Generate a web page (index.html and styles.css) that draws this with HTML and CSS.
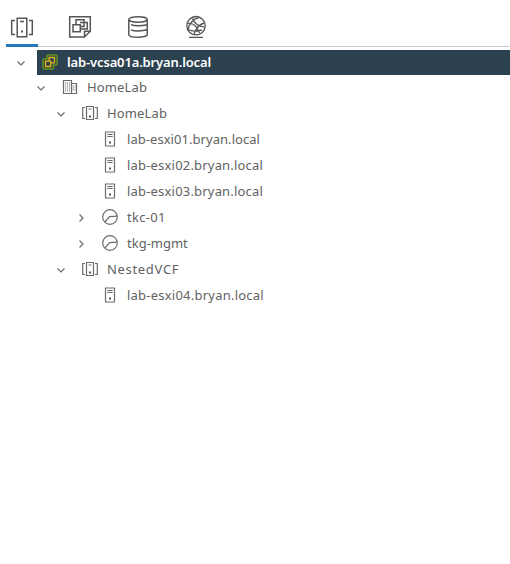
FILE: index.html
```
<!DOCTYPE html>
<html lang="en">
<head>
<meta charset="utf-8">
<title>Inventory</title>
<link rel="stylesheet" href="styles.css">
</head>
<body>
<svg class="defs" width="0" height="0">
  <symbol id="down" viewBox="0 0 10 10"><path d="M1.500 3.500 5 7l3.500-3.500"/></symbol>
  <symbol id="right" viewBox="0 0 10 10"><path d="M3.500 1.500 7 5 3.500 8.500"/></symbol>
  <symbol id="cluster" viewBox="0 0 16 16"><path d="M3 2.500H.7v11H3M13 2.500h2.300v11H13M4.500 1.500h7v13h-7zM6.500 4h3"/><path class="dot" d="M7 10.500h2v2H7z"/></symbol>
  <symbol id="host" viewBox="0 0 16 16"><path d="M3.500 1h9v14h-9zM5.300 3.500h5.400M5.300 5.500h5.400"/><path class="dot" d="M7 10.500h2v2H7z"/></symbol>
  <symbol id="pool" viewBox="0 0 16 16"><circle cx="8" cy="8" r="7.300"/><path d="M2.800 13 7.600 7.700l7.400-.5"/></symbol>
</svg>
<nav class="tabs">
  <a class="tab active"><svg class="tab-icon" viewBox="0 0 24 24"><path d="M5 5.500H1.700v14H5M19 5.500h3.300v14H19M7.200 3.200h9.600v18.600H7.200zM10 6.500h4"/><path class="dot" d="M11 15.500h2v2h-2z"/></svg></a>
  <a class="tab"><svg class="tab-icon" viewBox="0 0 24 24"><path d="M1.700 1.700h20.600v14.500l-5.800 5.800H1.700zM22 16.200h-5.500v5.500"/><path d="M12 7.500h7.300v6.500h-7M8 9.500V4.700h8v6.800h-3.500M5 9.700h7.300v7.100H5z"/></svg></a>
  <a class="tab"><svg class="tab-icon" viewBox="0 0 24 24"><ellipse cx="12" cy="4.500" rx="9.200" ry="2.700"/><path d="M2.800 4.500v15c0 3.700 18.400 3.700 18.400 0v-15M5 9.700c3 1.500 11 1.500 16 0M5 14.800c3 1.500 11 1.500 16 0"/></svg></a>
  <a class="tab"><svg class="tab-icon globe" viewBox="0 0 24 24"><circle cx="12" cy="10.700" r="9.200"/><path d="M5 22.300h14M15 2.500C9.500 4 5.500 8 4 14.500M8.500 3.200c1.500 4.500 6 8 12 9M3.300 8.500c5-1 9.500 2 12.200 9.500M20.500 8c-4.500 1-8 4-10.500 11M4 14.500c4 2 8.500 2 14 .5"/></svg></a>
</nav>
<main class="tree">
  <div class="row level-0 selected"><svg class="caret"><use href="#down"/></svg><div class="item"><svg class="icon vcenter" viewBox="0 0 16 16"><path class="outer" d="M6 .9h8q1 0 1 1v8q0 1-1 1h-2.500v3q0 1-1 1H2q-1 0-1-1v-8q0-1 1-1h3v-3q0-1 1-1z"/><path class="inner" d="M3.500 7.200h5.300v5.300H3.500zM7 7V3.500h5.500v5.300H9"/></svg><span class="label name-vc">lab-vcsa01a.bryan.local</span></div></div>
  <div class="row level-1"><svg class="caret"><use href="#down"/></svg><div class="item"><svg class="icon" viewBox="0 0 16 16"><path d="M1.500 14.500v-13h8v13M9.500 4.500h5v10M.8 14.500h14.400"/><path class="windows" d="M3.700 3.500v9M5.600 3.500v9M7.500 3.500v9M11.200 6.500v6M13 6.500v6"/></svg><span class="label name-dc">HomeLab</span></div></div>
  <div class="row level-2"><svg class="caret"><use href="#down"/></svg><div class="item"><svg class="icon"><use href="#cluster"/></svg><span class="label name-dc">HomeLab</span></div></div>
  <div class="row level-3"><span class="caret"></span><div class="item"><svg class="icon"><use href="#host"/></svg><span class="label name-h1">lab-esxi01.bryan.local</span></div></div>
  <div class="row level-3"><span class="caret"></span><div class="item"><svg class="icon"><use href="#host"/></svg><span class="label name-h">lab-esxi02.bryan.local</span></div></div>
  <div class="row level-3"><span class="caret"></span><div class="item"><svg class="icon"><use href="#host"/></svg><span class="label name-h">lab-esxi03.bryan.local</span></div></div>
  <div class="row level-3"><svg class="caret"><use href="#right"/></svg><div class="item"><svg class="icon"><use href="#pool"/></svg><span class="label name-tkc">tkc-01</span></div></div>
  <div class="row level-3"><svg class="caret"><use href="#right"/></svg><div class="item"><svg class="icon"><use href="#pool"/></svg><span class="label">tkg-mgmt</span></div></div>
  <div class="row level-2"><svg class="caret"><use href="#down"/></svg><div class="item"><svg class="icon"><use href="#cluster"/></svg><span class="label name-vcf">NestedVCF</span></div></div>
  <div class="row level-3"><span class="caret"></span><div class="item"><svg class="icon"><use href="#host"/></svg><span class="label name-h4">lab-esxi04.bryan.local</span></div></div>
</main>
</body>
</html>
```
FILE: styles.css
```
* { box-sizing: border-box; }
body {
  margin: 0;
  height: 564px;
  overflow: hidden;
  background: #fff;
  color: #626262;
  font: 13px/25px Metropolis, "Noto Sans", sans-serif;
}
.defs { display: block; }
svg { fill: none; stroke: #6c6c6c; stroke-width: 1.200; }
.dot { fill: #565656; stroke: none; }
.tabs {
  display: flex;
  gap: 26px;
  height: 47px;
  margin-left: 6px;
  box-shadow: inset 0 -1px #c5c9cd;
}
.tab {
  width: 32px;
  padding: 15px 4px 0;
}
.tab.active { box-shadow: inset 0 -3px #2276b9; }
.tab-icon {
  display: block;
  width: 24px;
  height: 24px;
  stroke: #565656;
  stroke-width: 1.500;
}
.globe { stroke-width: 1.300; }
.tree { padding-top: 3px; }
.row {
  display: flex;
  align-items: center;
  height: 26px;
  padding-bottom: 1px;
}
.level-0 { height: 25px; padding: 0 0 0 16px; }
.level-1 { padding-left: 36px; }
.level-2 { padding-left: 56px; }
.level-3 { padding-left: 76px; }
.caret {
  flex: none;
  width: 10px;
  height: 10px;
  margin: 1px 11px 0 0;
  stroke-width: 1.200;
}
.item {
  display: flex;
  flex: 1;
  align-items: center;
  height: 25px;
  padding-left: 5px;
}
.selected .item {
  background: #2d4250;
  color: #fff;
  font-weight: 600;
}
.icon {
  flex: none;
  width: 16px;
  height: 16px;
  margin-right: 9px;
}
.level-1 .icon,
.level-2 .icon,
.level-3 .icon { margin-top: -1px; }
.vcenter { margin-top: -2px; }
.outer { stroke: #60951a; stroke-width: 1.500; }
.inner { stroke: #e5b611; stroke-width: 1.300; }
.windows { stroke-dasharray: 1 1; stroke-width: 1; }
.label { white-space: nowrap; }
.name-vc { margin-top: -1px; letter-spacing: -0.140px; }
.name-dc { letter-spacing: 0.140px; }
.name-h1 { letter-spacing: 0.050px; }
.name-h { letter-spacing: 0.190px; }
.name-h4 { letter-spacing: 0.230px; }
.name-tkc { letter-spacing: 0.300px; }
.name-vcf { letter-spacing: 0.680px; }
```
